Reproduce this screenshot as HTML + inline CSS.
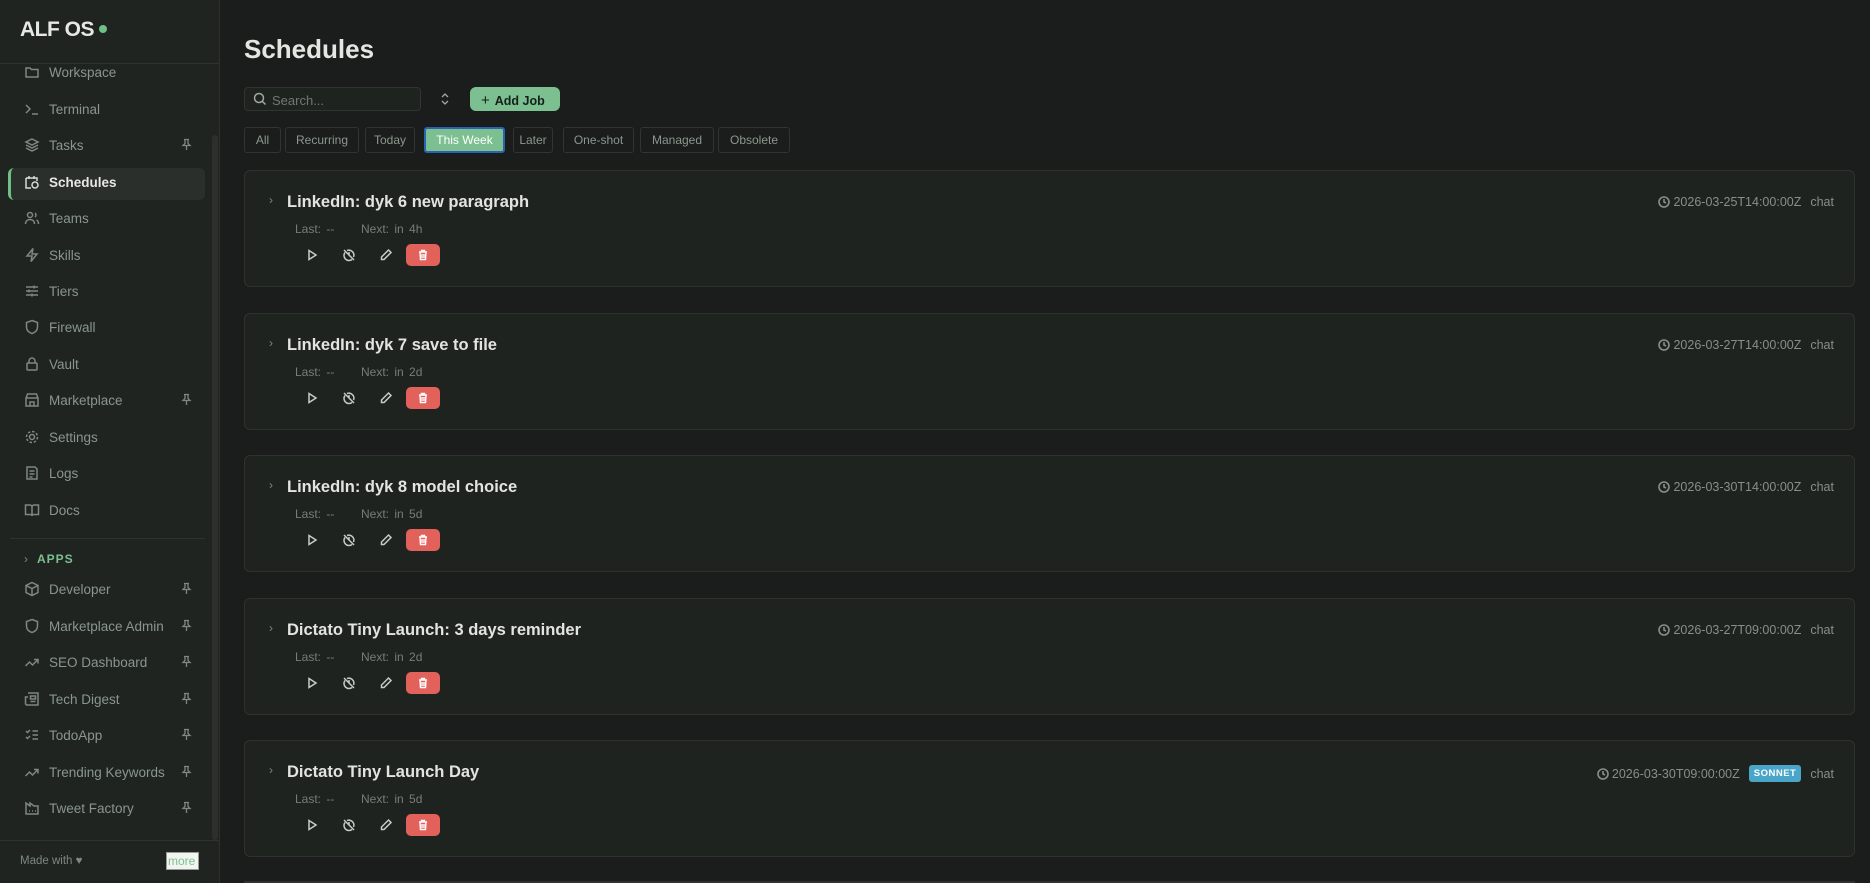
<!DOCTYPE html>
<html><head><meta charset="utf-8"><style>
*{box-sizing:border-box;margin:0;padding:0}
html,body{width:1870px;height:883px;overflow:hidden}
body{background:#1a1d1b;font-family:"Liberation Sans",sans-serif;color:#d8dcd8}
#wrap{position:relative;width:1870px;height:883px;overflow:hidden}
.sb{position:absolute;left:0;top:0;width:220px;height:883px;background:#1f2421;border-right:1px solid #2c312d}
.logo{position:absolute;left:20px;top:18px;font-size:21px;font-weight:bold;color:#e6e8e4;letter-spacing:-0.5px}
.logo i{display:inline-block;width:8px;height:8px;border-radius:50%;background:#6fbf86;margin-left:5px;vertical-align:3px}
.hr{position:absolute;left:0;width:219px;height:1px;background:#2e332f}
.ni{position:absolute;left:24px;height:20px;font-size:13.5px;color:#8a968c;display:flex;align-items:center}
.ni svg{width:16px;height:16px;margin-right:9px;stroke:#7d887f;fill:none;stroke-width:1.5}
.pin{position:absolute;left:181px;width:11px;height:13px;stroke:#7d887f;fill:none;stroke-width:1.3}
.act{position:absolute;left:8px;top:168px;width:197px;height:32px;background:#2a2f2c;border-radius:6px;border-left:3px solid #6fbf86}
.scroll{position:absolute;left:212px;top:135px;width:6px;height:705px;background:#2c302d;border-radius:3px}
h1{position:absolute;left:244px;top:34px;font-size:26px;font-weight:bold;color:#e4e6e2}
.search{position:absolute;left:244px;top:87px;width:177px;height:24px;border:1px solid #303531;border-radius:4px;background:#1f2320;font-size:13px;color:#6f7870;padding:5px 0 0 27px}
.add{position:absolute;left:470px;top:87px;width:90px;height:24px;background:#7cc091;border-radius:6px;font-size:12.5px;font-weight:bold;color:#142018;padding:5px 0 0 11px}
.tab{position:absolute;top:127px;height:26px;border:1px solid #303531;border-radius:3px;font-size:12px;color:#8d968f;text-align:center;line-height:24px}
.tab.on{background:#7cc091;color:#fff;border:2px solid #2a64b0;line-height:22px}
.card{position:absolute;left:244px;width:1611px;height:117px;background:#1f2320;border:1px solid #2e322f;border-radius:6px}
.card .t{position:absolute;left:42px;top:22px;font-size:16.5px;font-weight:bold;color:#e2e4e0}
.card .ch{position:absolute;left:24px;top:22px;font-size:12px;color:#7d887f}
.card .m{position:absolute;left:50px;top:51px;font-size:12px;color:#747e76;word-spacing:2px}
.card .r{position:absolute;right:20px;top:24px;font-size:12.5px;color:#868f88;display:flex;align-items:center}
.card .r svg{width:12px;height:12px;stroke:#868f88;fill:none;stroke-width:1.6;margin-right:3px}
.badge{background:#4aa6c8;color:#fff;font-size:9.5px;font-weight:bold;border-radius:3px;padding:3px 5px;margin-left:9px;letter-spacing:.5px}
.ic{position:absolute;top:77px;width:14px;height:14px;stroke:#c8ccc8;fill:none;stroke-width:1.5}
.del{position:absolute;left:161px;top:73px;width:34px;height:22px;background:#e2615b;border-radius:5px}
</style></head><body><div id="wrap">
<div class="sb">
<div class="logo">ALF OS<i></i></div>
<div class="hr" style="top:63px"></div>
<div class="scroll"></div>
<div class="act"></div>
<div class="ni" style="top:62px"><svg viewBox="0 0 16 16"><path d="M2 4h4l1.5 1.5H14v7.5H2z"/></svg>Workspace</div>
<div class="ni" style="top:99px"><svg viewBox="0 0 16 16"><path d="M2 4l4 4-4 4M8 13h6"/></svg>Terminal</div>
<div class="ni" style="top:135px"><svg viewBox="0 0 16 16"><path d="M8 2l6 3-6 3-6-3zM2 8l6 3 6-3M2 11l6 3 6-3"/></svg>Tasks</div>
<div class="ni" style="top:172px;color:#e6e8e4;font-weight:bold"><svg viewBox="0 0 16 16" style="stroke:#d8dcd8"><path d="M2 4h11v3M2 4v10h5M5 2v3M10 2v3"/><circle cx="11" cy="11" r="3"/></svg>Schedules</div>
<div class="ni" style="top:208px"><svg viewBox="0 0 16 16"><circle cx="6" cy="5" r="2.5"/><path d="M1.5 14c0-3 2-4.5 4.5-4.5s4.5 1.5 4.5 4.5M11 3a2.5 2.5 0 010 4M12.5 10c1.5.7 2 2 2 4"/></svg>Teams</div>
<div class="ni" style="top:245px"><svg viewBox="0 0 16 16"><path d="M9 1.5L3 9h5l-1 5.5L13 7H8z"/></svg>Skills</div>
<div class="ni" style="top:281px"><svg viewBox="0 0 16 16"><path d="M2 4h12M2 8h12M2 12h12M10 2.5v3M5 6.5v3M8 10.5v3"/></svg>Tiers</div>
<div class="ni" style="top:317px"><svg viewBox="0 0 16 16"><path d="M8 1.5l5.5 2v4.5c0 3.5-2.5 5.5-5.5 6.5C5 13.5 2.5 11.5 2.5 8V3.5z"/></svg>Firewall</div>
<div class="ni" style="top:354px"><svg viewBox="0 0 16 16"><rect x="3" y="7" width="10" height="7" rx="1"/><path d="M5 7V5a3 3 0 016 0v2"/></svg>Vault</div>
<div class="ni" style="top:390px"><svg viewBox="0 0 16 16"><path d="M2 6l1.5-4h9L14 6v8H2zM2 6h12M6 14v-4h4v4"/></svg>Marketplace</div>
<div class="ni" style="top:427px"><svg viewBox="0 0 16 16"><circle cx="8" cy="8" r="2.5"/><circle cx="8" cy="8" r="5.5" stroke-dasharray="2.5 1.8"/></svg>Settings</div>
<div class="ni" style="top:463px"><svg viewBox="0 0 16 16"><path d="M3 2h8l2 2v10H3zM5.5 6h5M5.5 9h5M5.5 12h3"/></svg>Logs</div>
<div class="ni" style="top:500px"><svg viewBox="0 0 16 16"><path d="M1.5 3h4.5a2 2 0 012 2v9a1.5 1.5 0 00-1.5-1.5h-5zM14.5 3H10a2 2 0 00-2 2v9a1.5 1.5 0 011.5-1.5h5z"/></svg>Docs</div>
<div class="hr" style="top:538px;left:10px;width:195px"></div>
<div class="ni" style="top:549px;font-size:12px;font-weight:bold;color:#7cc091;letter-spacing:1px"><span style="color:#7d887f;margin-right:8px;font-weight:normal">›</span>APPS</div>
<div class="ni" style="top:579px"><svg viewBox="0 0 16 16"><path d="M8 1.5l6 3v7l-6 3-6-3v-7zM2 4.5l6 3 6-3M8 7.5v7"/></svg>Developer</div>
<div class="ni" style="top:616px"><svg viewBox="0 0 16 16"><path d="M8 1.5l5.5 2v4.5c0 3.5-2.5 5.5-5.5 6.5C5 13.5 2.5 11.5 2.5 8V3.5z"/></svg>Marketplace Admin</div>
<div class="ni" style="top:652px"><svg viewBox="0 0 16 16"><path d="M1.5 12l4-4 3 3 5.5-5.5M10 5.5h4v4"/></svg>SEO Dashboard</div>
<div class="ni" style="top:689px"><svg viewBox="0 0 16 16"><path d="M4 2h10v12H3a1.5 1.5 0 01-1.5-1.5V6H4M6.5 5h5v3h-5zM6.5 10.5h5"/></svg>Tech Digest</div>
<div class="ni" style="top:725px"><svg viewBox="0 0 16 16"><path d="M2 4l1.5 1.5L6 3M2 10l1.5 1.5L6 9M8.5 4H14M8.5 8H14M8.5 12H14"/></svg>TodoApp</div>
<div class="ni" style="top:762px"><svg viewBox="0 0 16 16"><path d="M1.5 12l4-4 3 3 5.5-5.5M10 5.5h4v4"/></svg>Trending Keywords</div>
<div class="ni" style="top:798px"><svg viewBox="0 0 16 16"><path d="M2 14V3l4 3V3l4 3h4v8zM5 11h1M8 11h1M11 11h1"/></svg>Tweet Factory</div>
<div class="hr" style="top:840px"></div>
<div style="position:absolute;left:20px;top:855px;font-size:11.5px;color:#7d887f">Made with ♥</div>
<div style="position:absolute;left:166px;top:852px;width:33px;height:18px;background:#f2f4f0;border:1px solid #999;font-size:12px;color:#7cc091;padding:1px 0 0 1px">more</div>
<div id="pins"></div>
</div>

<h1>Schedules</h1>
<div class="search">Search...</div>
<svg style="position:absolute;left:253px;top:92px" width="14" height="14" viewBox="0 0 14 14" fill="none" stroke="#a0a8a2" stroke-width="1.5"><circle cx="6" cy="6" r="4.5"/><path d="M9.5 9.5l3 3"/></svg>
<svg style="position:absolute;left:440px;top:92px" width="10" height="14" viewBox="0 0 10 14" fill="none" stroke="#a0a8a2" stroke-width="1.3"><path d="M2 5l3-3 3 3M2 9l3 3 3-3"/></svg>
<div class="add"><span style="font-weight:normal;font-size:15px;margin-right:5px">+</span>Add Job</div>
<div class="tab" style="left:244px;width:37px">All</div>
<div class="tab" style="left:285px;width:74px">Recurring</div>
<div class="tab" style="left:365px;width:50px">Today</div>
<div class="tab on" style="left:424px;width:81px">This Week</div>
<div class="tab" style="left:513px;width:40px">Later</div>
<div class="tab" style="left:563px;width:71px">One-shot</div>
<div class="tab" style="left:640px;width:74px">Managed</div>
<div class="tab" style="left:718px;width:72px">Obsolete</div>

<div id="cards"></div>
<div style="position:absolute;left:244px;top:881px;width:1611px;height:2px;background:#2e322f"></div>
</div>
<script>
var p="";[138,393,582,619,655,692,728,765,801].forEach(function(t){p+='<svg class="pin" style="top:'+t+'px" viewBox="0 0 11 13"><path d="M3 1.5h5M4 1.5v4L2 7.5h7L7 5.5v-4M5.5 7.5V12"/></svg>';});
document.getElementById("pins").innerHTML=p;
var d=[["LinkedIn: dyk 6 new paragraph","4h","2026-03-25T14:00:00Z",0],["LinkedIn: dyk 7 save to file","2d","2026-03-27T14:00:00Z",0],["LinkedIn: dyk 8 model choice","5d","2026-03-30T14:00:00Z",0],["Dictato Tiny Launch: 3 days reminder","2d","2026-03-27T09:00:00Z",0],["Dictato Tiny Launch Day","5d","2026-03-30T09:00:00Z",1]];
var h="";d.forEach(function(c,i){var top=170+i*142.5;
h+='<div class="card" style="top:'+top+'px"><div class="ch">›</div><div class="t">'+c[0]+'</div><div class="m">Last: -- &nbsp;&nbsp;&nbsp; Next: in '+c[1]+'</div><div class="r"><svg viewBox="0 0 12 12"><circle cx="6" cy="6" r="5"/><path d="M6 3v3l2 1"/></svg>'+c[2]+(c[3]?'<span class="badge">SONNET</span>':'')+'<span style="margin-left:9px">chat</span></div>'+
'<svg class="ic" style="left:60px" viewBox="0 0 14 14"><path d="M4 2.5l7 4.5-7 4.5z"/></svg>'+
'<svg class="ic" style="left:97px" viewBox="0 0 14 14"><path d="M2 2l10 10M5 2.5a5 5 0 016.5 6.5M3 4.5a5 5 0 007 7M7 4v3"/></svg>'+
'<svg class="ic" style="left:134px" viewBox="0 0 14 14"><path d="M9.5 2l2.5 2.5-7 7H2.5V9z"/></svg>'+
'<div class="del"><svg style="position:absolute;left:11px;top:5px" width="12" height="12" viewBox="0 0 12 12" fill="none" stroke="#fff" stroke-width="1.4"><path d="M2 3h8M4.5 3V1.5h3V3M3 3l.5 7.5h5L9 3M5 5v4M7 5v4"/></svg></div></div>';});
document.getElementById("cards").innerHTML=h;
</script>
</body></html>
